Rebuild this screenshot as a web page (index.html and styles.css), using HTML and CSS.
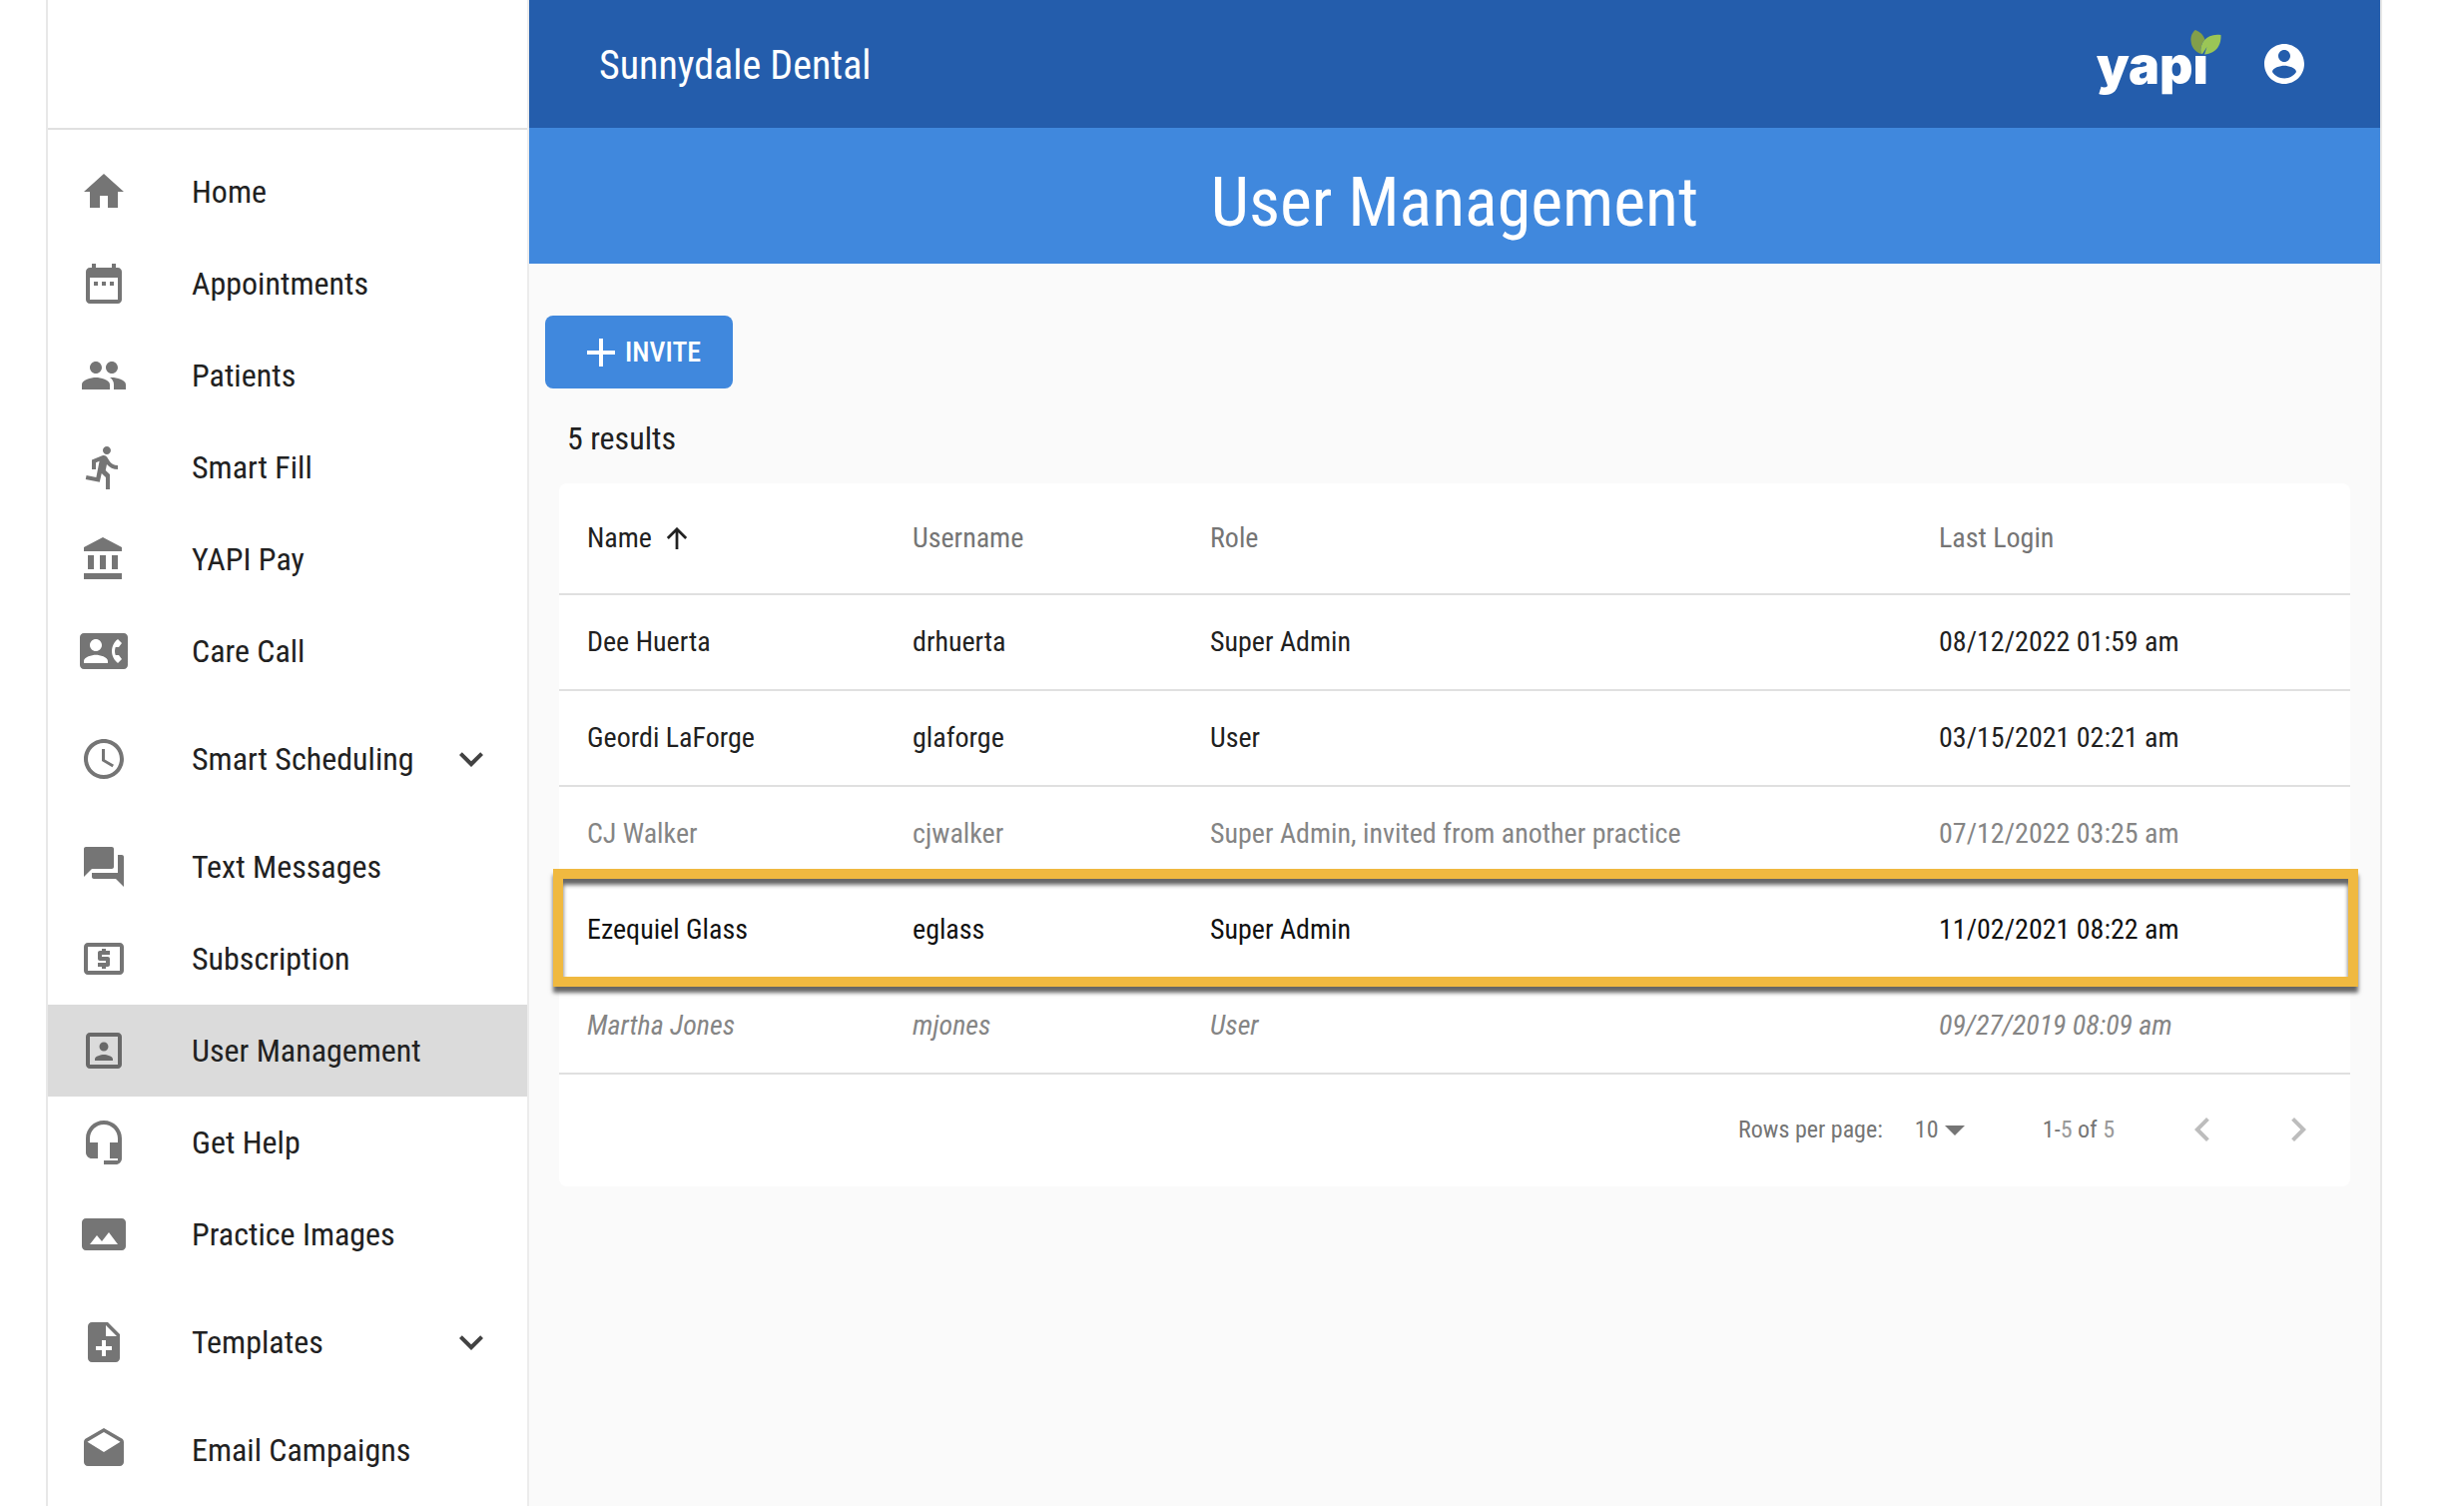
FILE: index.html
```
<!DOCTYPE html>
<html lang="en">
<head>
  <meta charset="UTF-8">
  <meta name="viewport" content="width=device-width, initial-scale=1.0">
  <title>User Management</title>
  <link rel="stylesheet" href="styles.css">
</head>
<body>
  <div class="app">
    <aside class="sidebar">
      <div class="sidebar-header"></div>
      <nav class="nav">
        <a href="#" class="nav-item">
          <svg class="icon" viewBox="0 0 24 24"><path d="M10 20v-6h4v6h5v-8h3L12 3 2 12h3v8z"/></svg>
          <span>Home</span>
        </a>
        <a href="#" class="nav-item">
          <svg class="icon" viewBox="0 0 24 24"><path d="M9 11H7v2h2v-2zm4 0h-2v2h2v-2zm4 0h-2v2h2v-2zm2-7h-1V2h-2v2H8V2H6v2H5c-1.11 0-1.99.9-1.99 2L3 20c0 1.1.89 2 2 2h14c1.1 0 2-.9 2-2V6c0-1.1-.9-2-2-2zm0 16H5V9h14v11z"/></svg>
          <span>Appointments</span>
        </a>
        <a href="#" class="nav-item">
          <svg class="icon" viewBox="0 0 24 24"><path d="M16 11c1.66 0 2.99-1.34 2.99-3S17.66 5 16 5c-1.66 0-3 1.34-3 3s1.34 3 3 3zm-8 0c1.66 0 2.99-1.34 2.99-3S9.66 5 8 5C6.34 5 5 6.34 5 8s1.34 3 3 3zm0 2c-2.33 0-7 1.17-7 3.5V19h14v-2.5c0-2.33-4.67-3.5-7-3.5zm8 0c-.29 0-.62.02-.97.05 1.16.84 1.97 1.97 1.97 3.45V19h6v-2.5c0-2.33-4.67-3.5-7-3.5z"/></svg>
          <span>Patients</span>
        </a>
        <a href="#" class="nav-item">
          <svg class="icon" viewBox="0 0 24 24"><path d="M13.49 5.48c1.1 0 2-.9 2-2s-.9-2-2-2-2 .9-2 2 .9 2 2 2zm-3.6 13.9l1-4.4 2.1 2v6h2v-7.5l-2.1-2 .6-3c1.3 1.5 3.3 2.5 5.5 2.5v-2c-1.9 0-3.5-1-4.3-2.4l-1-1.6c-.4-.6-1-1-1.7-1-.3 0-.5.1-.8.1l-5.2 2.2v4.7h2v-3.4l1.8-.7-1.6 8.1-4.9-1-.4 2 7 1.4z"/></svg>
          <span>Smart Fill</span>
        </a>
        <a href="#" class="nav-item">
          <svg class="icon" viewBox="0 0 24 24"><path d="M4 10v7h3v-7H4zm6 0v7h3v-7h-3zM2 22h19v-3H2v3zm14-12v7h3v-7h-3zm-4.5-9L2 6v2h19V6l-9.5-5z"/></svg>
          <span>YAPI Pay</span>
        </a>
        <a href="#" class="nav-item">
          <svg class="icon" viewBox="0 0 24 24"><path d="M22 3H2C.9 3 0 3.9 0 5v14c0 1.1.9 2 2 2h20c1.1 0 1.99-.9 1.99-2L24 5c0-1.1-.9-2-2-2zM8 6c1.66 0 3 1.34 3 3s-1.34 3-3 3-3-1.34-3-3 1.34-3 3-3zm6 12H2v-1c0-2 4-3.1 6-3.1s6 1.1 6 3.1v1zm3.85-4h1.64L21 16l-1.99 1.99c-1.31-.98-2.28-2.38-2.73-3.99-.18-.64-.28-1.31-.28-2s.1-1.36.28-2c.45-1.62 1.42-3.01 2.73-3.99L21 8l-1.51 2h-1.64c-.22.63-.35 1.3-.35 2s.13 1.37.35 2z"/></svg>
          <span>Care Call</span>
        </a>
        <a href="#" class="nav-item expandable">
          <svg class="icon" viewBox="0 0 24 24"><path d="M11.99 2C6.47 2 2 6.48 2 12s4.47 10 9.99 10C17.52 22 22 17.52 22 12S17.52 2 11.99 2zM12 20c-4.42 0-8-3.58-8-8s3.58-8 8-8 8 3.58 8 8-3.58 8-8 8z"/><path d="M12.5 7H11v6l5.25 3.15.75-1.23-4.5-2.67z"/></svg>
          <span>Smart Scheduling</span>
          <svg class="icon chevron" viewBox="0 0 24 24"><path d="M16.59 8.59L12 13.17 7.41 8.59 6 10l6 6 6-6z"/></svg>
        </a>
        <a href="#" class="nav-item">
          <svg class="icon" viewBox="0 0 24 24"><path d="M21 6h-2v9H6v2c0 .55.45 1 1 1h11l4 4V7c0-.55-.45-1-1-1zm-4 6V3c0-.55-.45-1-1-1H3c-.55 0-1 .45-1 1v14l4-4h10c.55 0 1-.45 1-1z"/></svg>
          <span>Text Messages</span>
        </a>
        <a href="#" class="nav-item">
          <svg class="icon" viewBox="0 0 24 24"><path d="M11 17h2v-1h1c.55 0 1-.45 1-1v-3c0-.55-.45-1-1-1h-3v-1h4V8h-2V7h-2v1h-1c-.55 0-1 .45-1 1v3c0 .55.45 1 1 1h3v1H9v2h2v1zm9-13H4c-1.11 0-1.99.89-1.99 2L2 18c0 1.11.89 2 2 2h16c1.11 0 2-.89 2-2V6c0-1.11-.89-2-2-2zm0 14H4V6h16v12z"/></svg>
          <span>Subscription</span>
        </a>
        <a href="#" class="nav-item selected">
          <svg class="icon" viewBox="0 0 24 24"><path d="M12 12.25c1.24 0 2.25-1.01 2.25-2.25S13.24 7.75 12 7.75 9.75 8.76 9.75 10s1.01 2.25 2.25 2.25zm4.5 4c0-1.5-3-2.25-4.5-2.25s-4.5.75-4.5 2.25V17h9v-.75zM19 3H5c-1.1 0-2 .9-2 2v14c0 1.1.9 2 2 2h14c1.1 0 2-.9 2-2V5c0-1.1-.9-2-2-2zm0 16H5V5h14v14z"/></svg>
          <span>User Management</span>
        </a>
        <a href="#" class="nav-item">
          <svg class="icon" viewBox="0 0 24 24"><path d="M12 1c-4.97 0-9 4.03-9 9v7c0 1.66 1.34 3 3 3h3v-8H5v-2c0-3.87 3.13-7 7-7s7 3.13 7 7v2h-4v8h4v1h-7v2h6c1.66 0 3-1.34 3-3V10c0-4.97-4.03-9-9-9z"/></svg>
          <span>Get Help</span>
        </a>
        <a href="#" class="nav-item">
          <svg class="icon" viewBox="0 0 24 24"><path d="M23 18V6c0-1.1-.9-2-2-2H3c-1.1 0-2 .9-2 2v12c0 1.1.9 2 2 2h18c1.1 0 2-.9 2-2zM8.5 12.5l2.5 3.01L14.5 11l4.5 6H5l3.5-4.5z"/></svg>
          <span>Practice Images</span>
        </a>
        <a href="#" class="nav-item expandable">
          <svg class="icon" viewBox="0 0 24 24"><path d="M14 2H6c-1.1 0-1.99.9-1.99 2L4 20c0 1.1.89 2 1.99 2H18c1.1 0 2-.9 2-2V8l-6-6zm2 14h-3v3h-2v-3H8v-2h3v-3h2v3h3v2zm-3-7V3.5L18.5 9H13z"/></svg>
          <span>Templates</span>
          <svg class="icon chevron" viewBox="0 0 24 24"><path d="M16.59 8.59L12 13.17 7.41 8.59 6 10l6 6 6-6z"/></svg>
        </a>
        <a href="#" class="nav-item">
          <svg class="icon" viewBox="0 0 24 24"><path d="M21.99 8c0-.72-.37-1.35-.94-1.7L12 1 2.95 6.3C2.38 6.65 2 7.28 2 8v10c0 1.1.9 2 2 2h16c1.1 0 2-.9 2-2l-.01-10zM12 13L3.74 7.84 12 3l8.26 4.84L12 13z"/></svg>
          <span>Email Campaigns</span>
        </a>
      </nav>
    </aside>

    <main class="main">
      <header class="topbar">
        <span class="practice">Sunnydale Dental</span>
        <div class="logo">
          yapı
          <svg class="leaf" viewBox="0 0 31 25">
            <path fill="#829f4a" d="M5 0C10 2 13 5 14.5 9.5C11 13 10 18 10.5 24C4 21.5 1 17 .5 11C0 6.5 2 2 5 0z"/>
            <path fill="#9bc656" d="M30.5 5C31 14 27 23.500 14 24.500L16.5 17L12 24L10.5 23.500C9 12 17 3 30.5 5z"/>
          </svg>
        </div>
        <button class="account" aria-label="Account">
          <svg class="icon" viewBox="0 0 24 24"><path d="M12 2C6.48 2 2 6.48 2 12s4.48 10 10 10 10-4.48 10-10S17.52 2 12 2zm0 3c1.66 0 3 1.34 3 3s-1.34 3-3 3-3-1.34-3-3 1.34-3 3-3zm0 14.200c-2.500 0-4.710-1.280-6-3.220.030-1.990 4-3.080 6-3.080 1.990 0 5.970 1.090 6 3.080-1.290 1.940-3.500 3.220-6 3.220z"/></svg>
        </button>
      </header>
      <h1 class="page-title">User Management</h1>

      <div class="content">
        <button class="invite">
          <svg class="icon" viewBox="0 0 24 24"><path d="M19 13h-6v6h-2v-6H5v-2h6V5h2v6h6v2z"/></svg>
          <span>INVITE</span>
        </button>
        <p class="results">5 results</p>

        <section class="card">
          <table class="users">
            <thead>
              <tr>
                <th class="col-name sorted">
                  <span class="sort">Name
                    <svg class="arrow" viewBox="0 0 24 24"><path d="M2 12l10-10 10 10M12 3v21"/></svg>
                  </span>
                </th>
                <th class="col-username">Username</th>
                <th>Role</th>
                <th class="col-login">Last Login</th>
              </tr>
            </thead>
            <tbody>
              <tr>
                <td>Dee Huerta</td>
                <td>drhuerta</td>
                <td>Super Admin</td>
                <td>08/12/2022 01:59 am</td>
              </tr>
              <tr>
                <td>Geordi LaForge</td>
                <td>glaforge</td>
                <td>User</td>
                <td>03/15/2021 02:21 am</td>
              </tr>
              <tr class="external">
                <td>CJ Walker</td>
                <td>cjwalker</td>
                <td>Super Admin, invited from another practice</td>
                <td>07/12/2022 03:25 am</td>
              </tr>
              <tr class="highlighted">
                <td>Ezequiel Glass</td>
                <td>eglass</td>
                <td>Super Admin</td>
                <td>11/02/2021 08:22 am</td>
              </tr>
              <tr class="inactive">
                <td>Martha Jones</td>
                <td>mjones</td>
                <td>User</td>
                <td>09/27/2019 08:09 am</td>
              </tr>
            </tbody>
          </table>

          <div class="pagination">
            <label for="rows">Rows per page:</label>
            <div class="rows">
              <select id="rows">
                <option>10</option>
                <option>25</option>
                <option>50</option>
              </select>
              <svg class="icon" viewBox="0 0 24 24"><path d="M7 10l5 5 5-5z"/></svg>
            </div>
            <span class="range">1-<span class="count">5</span> of <span class="count">5</span></span>
            <button class="page-btn" aria-label="Previous page" disabled>
              <svg class="icon" viewBox="0 0 24 24"><path d="M15.41 16.59L10.83 12l4.58-4.59L14 6l-6 6 6 6 1.410-1.410z"/></svg>
            </button>
            <button class="page-btn" aria-label="Next page" disabled>
              <svg class="icon" viewBox="0 0 24 24"><path d="M8.59 16.59L13.17 12 8.59 7.41 10 6l6 6-6 6-1.410-1.410z"/></svg>
            </button>
          </div>
        </section>
      </div>
    </main>
  </div>
</body>
</html>
```
FILE: styles.css
```
* { box-sizing: border-box; }
body { margin: 0; background: #fff; color: #212121; font-family: "Roboto Condensed", Roboto, sans-serif; font-size: 28px; line-height: 40px; }
button, select { font-family: inherit; border: none; background: none; padding: 0; cursor: pointer; }

.app { display: flex; height: 100vh; overflow: hidden; margin: 0 82px 0 46px; border-left: 2px solid #e8e8e8; border-right: 2px solid #e8e8e8; }
.icon { width: 48px; height: 48px; flex: none; fill: currentColor; }

/* sidebar */
.sidebar { width: 482px; flex: none; border-right: 2px solid #ececec; }
.sidebar-header { height: 130px; border-bottom: 2px solid #e0e0e0; }
.nav { padding-top: 16px; }
.nav-item { display: flex; align-items: center; height: 92px; padding: 0 32px; font-size: 32px; color: #212121; text-decoration: none; white-space: nowrap; }
.nav-item .icon { color: #757575; }
.nav-item span { margin-left: 64px; }
.nav-item.expandable { margin: 16px 0; }
.nav-item .chevron { margin-left: auto; color: #424242; }
.nav-item.selected { background: #dbdbdb; }
.nav-item.selected .icon { color: #696969; }

/* header */
.main { flex: 1; background: #fafafa; }
.topbar { display: flex; align-items: center; height: 128px; padding: 0 72px 0 70px; background: #245dac; color: #fff; }
.practice { padding-top: 4px; font-size: 40px; line-height: 48px; }
.logo { position: relative; margin-left: auto; padding-top: 4px; font-family: Inter, sans-serif; font-size: 52px; font-weight: 900; line-height: 64px; }
.leaf { position: absolute; right: -13px; top: 0; width: 31px; height: 25px; }
.account { display: flex; margin-left: 52px; color: #fff; }
.page-title { margin: 0; padding-top: 2px; height: 136px; background: #4088dd; color: #fff; font-size: 68px; font-weight: 400; line-height: 146px; text-align: center; }

/* content */
.content { padding: 52px 30px 0; }
.invite { display: flex; align-items: center; height: 73px; margin-left: -14px; padding: 0 32px; border-radius: 8px; background: #4088dd; color: #fff; font-size: 28px; font-weight: 500; }
.results { margin: 30px 8px 25px; font-size: 32px; }
.card { background: #fff; border-radius: 8px; }

.users { width: 100%; border-collapse: separate; border-spacing: 0; table-layout: fixed; }
.users th, .users td { padding: 0 28px; border-bottom: 2px solid #e0e0e0; text-align: left; white-space: nowrap; }
.users th { height: 112px; font-weight: 400; color: #757575; }
.users td { height: 96px; }
.users th.sorted { color: #212121; }
.col-name { width: 326px; }
.col-username { width: 298px; }
.col-login { width: 440px; }
.sort { display: flex; align-items: center; gap: 14px; }
.arrow { width: 22px; height: 22px; fill: none; stroke: currentColor; stroke-width: 3; }
.users .external td { color: #858585; }
.users .inactive td { color: #858585; font-style: italic; }

/* frame around the highlighted user */
.highlighted { position: relative; }
.highlighted td { color: #111; }
.highlighted td:first-child::after { content: ""; position: absolute; inset: -14px -8px -8px -6px; border: 10px solid #f0b940; box-shadow: 0 6px 4px #666, inset 0 6px 4px #666; }

/* pagination */
.pagination { display: flex; align-items: center; justify-content: flex-end; height: 112px; padding: 0 4px 2px 0; font-size: 24px; color: #757575; }
.rows { display: flex; align-items: center; margin-left: 32px; }
.rows select { appearance: none; font-size: 24px; color: inherit; }
.rows .icon { margin-left: -8px; }
.range { margin: 0 40px 0 64px; }
.count { color: #999; }
.page-btn { display: flex; padding: 24px; color: #bdbdbd; }
```
